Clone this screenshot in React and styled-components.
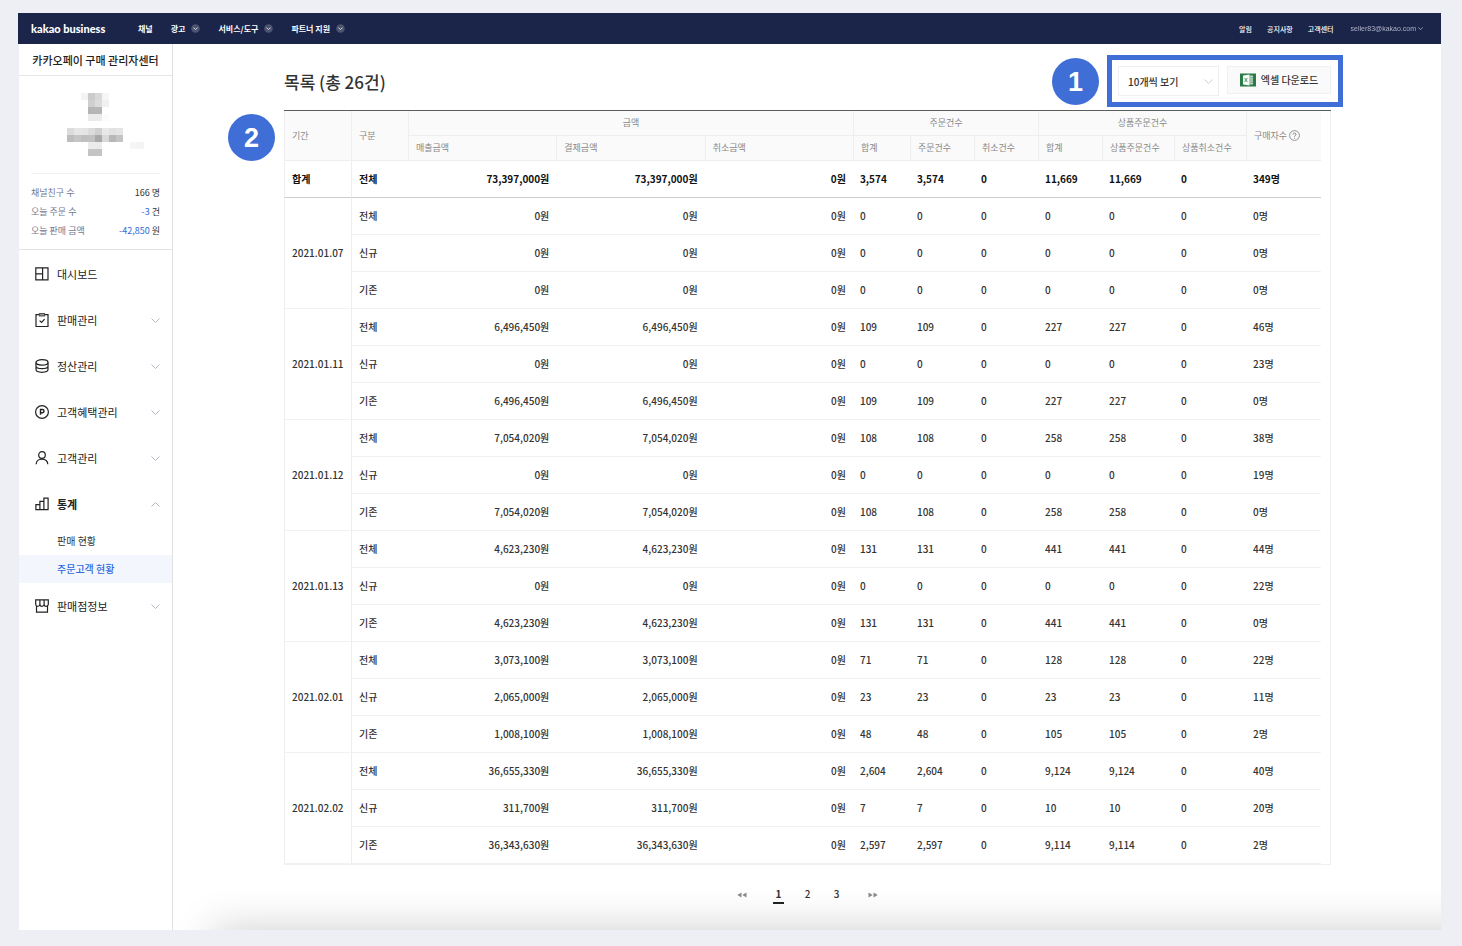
import React from "react";
import styled, { createGlobalStyle, css } from "styled-components";

const BLUE = "#3f6fd6";
const KR = `"Noto Sans CJK KR", "Noto Sans", sans-serif`;

const GlobalStyle = createGlobalStyle`
  *, *::before, *::after { box-sizing: border-box; }
  body {
    margin: 0;
    background: #eeeff5;
    color: #333;
    font-family: ${KR};
    font-size: 10px;
  }
  a { color: inherit; text-decoration: none; }
  button, select { font-family: inherit; color: inherit; margin: 0; }
`;

/* ---------- page frame ---------- */

const Page = styled.div`
  min-height: 100vh;
  display: flex;
  flex-direction: column;
  padding: 13px 21px 16px 18px;
`;

const Body = styled.div`
  flex: 1;
  display: flex;
  margin-left: 1px;
  background: #fff;
`;

/* ---------- top bar ---------- */

const TopBar = styled.header`
  display: flex;
  align-items: center;
  justify-content: space-between;
  height: 31px;
  padding: 0 18px 0 13px;
  background: #1b2449;
  color: #fff;
`;

const TopGroup = styled.div`
  display: flex;
  align-items: center;
`;

const Logo = styled.a`
  width: 107px;
  font-family: Lato, Inter, sans-serif;
  font-size: 11px;
  font-weight: 900;
  line-height: 16px;
  white-space: nowrap;
`;

const TopNav = styled.nav`
  display: flex;
  align-items: center;
  gap: 18px;
`;

const TopLink = styled.a`
  display: flex;
  align-items: center;
  gap: 6px;
  font-size: 8px;
  font-weight: 700;
  line-height: 16px;
`;

const UtilNav = styled.nav`
  display: flex;
  align-items: center;
  gap: 15px;
  font-size: 7px;
  font-weight: 500;
  line-height: 16px;
`;

const Account = styled.button`
  display: flex;
  align-items: center;
  gap: 2px;
  margin-left: 2px;
  padding: 0;
  border: 0;
  background: none;
  color: #aeb3c6;
  font-family: "Liberation Sans", sans-serif;
  font-size: 7px;
  line-height: 16px;
`;

const Smudged = styled.span`
  filter: blur(0.6px);
`;

/* ---------- sidebar ---------- */

const Sidebar = styled.aside`
  flex: none;
  width: 154px;
  border-right: 1px solid #e1e1e5;
`;

const CenterName = styled.h1`
  margin: 0;
  height: 32px;
  border-bottom: 1px solid #e6e6e9;
  font-size: 11px;
  font-weight: 500;
  line-height: 32px;
  text-align: center;
  color: #222;
`;

const Profile = styled.section`
  padding: 17px 12px 9px;
  border-bottom: 1px solid #e3e3e6;
`;

const Mosaic = styled.svg`
  display: block;
  width: 77px;
  height: 63px;
  margin: 0 0 17px 36px;
`;

const Stats = styled.dl`
  margin: 0;
  padding-top: 9px;
  border-top: 1px solid #f1f1f3;
`;

const Stat = styled.div`
  display: flex;
  justify-content: space-between;
  font-size: 9px;
  line-height: 19px;
`;

const StatLabel = styled.dt`
  color: #74778f;
`;

const StatValue = styled.dd`
  margin: 0;
  color: #333;
`;

const StatNumber = styled.span`
  color: ${(p) => (p.$negative ? "#2f69dc" : "inherit")};
`;

const SideNav = styled.nav`
  padding-top: 1px;
`;

const MenuButton = styled.button`
  display: flex;
  align-items: center;
  gap: 8px;
  width: 100%;
  height: 46px;
  padding: 0 12px 0 16px;
  border: 0;
  background: none;
  color: #222;
  font-size: 11px;
  font-weight: ${(p) => (p.$open ? 700 : 400)};
  line-height: 16px;
  text-align: left;
`;

const MenuLabel = styled.span`
  flex: 1;
`;

const SubLink = styled.a`
  display: block;
  height: 28px;
  padding-left: 38px;
  line-height: 28px;
  font-size: 10px;
  ${(p) =>
    p.$active &&
    css`
      background: #f3f6fc;
      color: #2f69dc;
      font-weight: 500;
    `}
`;

const MenuList = styled.ul`
  margin: 0;
  padding: 0;
  list-style: none;
`;

/* ---------- main ---------- */

const Main = styled.main`
  position: relative;
  flex: 1;
  min-width: 0;
  padding: 22px 110px 0 111px;
  overflow: hidden;

  &::after {
    content: "";
    position: absolute;
    top: 100%;
    left: 40px;
    right: -80px;
    height: 80px;
    box-shadow: 0 0 44px rgba(0, 0, 0, 0.2);
    pointer-events: none;
  }
`;

const ListHead = styled.div`
  position: relative;
  display: flex;
  justify-content: space-between;
  align-items: flex-start;
  height: 44px;
`;

const Title = styled.h2`
  margin: 0;
  font-size: 17px;
  font-weight: 500;
  line-height: 32px;
  color: #333;
`;

const Tools = styled.div`
  position: relative;
  display: flex;
  align-items: flex-start;
  gap: 8px;
`;

const Highlight = styled.div`
  position: absolute;
  inset: -11px -12px -11px -11px;
  border: 5px solid ${BLUE};
  pointer-events: none;
`;

const Badge = styled.span`
  position: absolute;
  top: ${(p) => p.$top};
  left: ${(p) => p.$left};
  display: flex;
  align-items: center;
  justify-content: center;
  width: 47px;
  height: 47px;
  border-radius: 50%;
  background: ${BLUE};
  color: #fff;
  font-family: "Liberation Sans", sans-serif;
  font-size: 27px;
  font-weight: 700;
  line-height: 32px;
`;

const SelectBox = styled.div`
  position: relative;

  svg {
    position: absolute;
    top: 11px;
    right: 6px;
    pointer-events: none;
  }
`;

const Select = styled.select`
  display: block;
  appearance: none;
  width: 101px;
  height: 30px;
  padding: 0 24px 0 9px;
  border: 1px solid #efefef;
  border-radius: 0;
  background: #fff;
  color: #333;
  font-size: 10px;
  font-weight: 500;
`;

const ExcelButton = styled.button`
  display: flex;
  align-items: center;
  justify-content: center;
  gap: 5px;
  width: 104px;
  height: 28px;
  padding: 0;
  border: 1px solid #f0f0f0;
  background: #fafafa;
  font-size: 10px;
  font-weight: 500;
  line-height: 16px;
`;

const TableFrame = styled.div`
  position: relative;
  padding-right: 9px;
  border: solid #f0f0f0;
  border-width: 0 1px 1px 0;

  &::before {
    content: "";
    display: block;
    height: 1px;
    margin-right: -10px;
    background: #5c5c5c;
  }
`;

const Table = styled.table`
  width: 100%;
  table-layout: fixed;
  border-collapse: separate;
  border-spacing: 0;
`;

const HeadCell = styled.th`
  height: 25px;
  padding: 0 7px;
  border: solid #eeeeee;
  border-width: 0 ${(p) => (p.$last ? 0 : 1)}px 1px ${(p) => (p.$first ? 1 : 0)}px;
  background: #fafafa;
  color: #888;
  font-size: 9px;
  font-weight: 400;
  line-height: 16px;
  text-align: ${(p) => (p.$group ? "center" : "left")};
  white-space: nowrap;
`;

const HelpLabel = styled.span`
  display: flex;
  align-items: center;
  gap: 2px;
`;

const Row = styled.tr`
  color: ${(p) => (p.$total ? "#111" : "#333")};
  font-weight: ${(p) => (p.$total ? 700 : 500)};
  --line: ${(p) => (p.$total ? "#cccccc" : "#f2f2f2")};
`;

const Cell = styled.td`
  height: 37px;
  padding: 0 8px 0 6px;
  border-bottom: 1px solid var(--line);
  font-size: 10px;
  line-height: 16px;
  text-align: ${(p) => (p.$money ? "right" : "left")};
  white-space: nowrap;
`;

const KindCell = styled(Cell)`
  padding-left: 7px;
`;

const PeriodCell = styled(Cell).attrs({ as: "th", scope: "rowgroup" })`
  padding: 0 0 0 7px;
  font-weight: inherit;
  border-left: 1px solid #eeeeee;
  border-right: 1px solid #eeeeee;
`;

const Pager = styled.nav`
  display: flex;
  justify-content: center;
  align-items: center;
  gap: 26px;
  padding: 20px 0 24px;
`;

const Pages = styled.div`
  display: flex;
  gap: 18px;
`;

const PageLink = styled.a`
  width: 11px;
  height: 19px;
  border-bottom: 2px solid ${(p) => (p.$current ? "#222" : "transparent")};
  font-size: 10px;
  font-weight: ${(p) => (p.$current ? 700 : 500)};
  line-height: 18px;
  text-align: center;
`;

const PagerStep = styled.a`
  display: flex;
  color: #8a8a8a;
`;

/* ---------- icons ---------- */

const Icon = ({ size = 14, children, ...rest }) => (
  <svg
    width={size}
    height={size}
    viewBox="0 0 14 14"
    fill="none"
    stroke="#222"
    strokeWidth="1.200"
    aria-hidden="true"
    {...rest}
  >
    {children}
  </svg>
);

const icons = {
  dashboard: (
    <Icon>
      <path d="M.8.900h12.200v11.900H.8zM7.600.900v11.900M.8 6.800h6.800" />
    </Icon>
  ),
  orders: (
    <Icon>
      <path d="M4.200 1.600H1v12h12v-12H9.800" />
      <path d="M4.500.600h5v2.200h-5z" fill="#aaa" stroke="#555" />
      <path d="M4.600 7.600l2 1.900 3-3.400" />
    </Icon>
  ),
  settlement: (
    <Icon>
      <ellipse cx="7" cy="3.400" rx="6" ry="2.700" />
      <path d="M1 3.400v7.200c0 1.500 2.700 2.700 6 2.700s6-1.200 6-2.700V3.400M1 7c0 1.500 2.700 2.700 6 2.700S13 8.500 13 7" />
    </Icon>
  ),
  benefit: (
    <Icon>
      <circle cx="7" cy="7" r="6.400" />
      <path d="M5.500 9.800V4.500h1.900a1.600 1.600 0 0 1 0 3.200H5.500" strokeWidth="1.400" />
    </Icon>
  ),
  customer: (
    <Icon>
      <circle cx="7" cy="4" r="3.300" />
      <path d="M1.200 13.200c0-3 2.500-5 5.800-5s5.800 2 5.800 5" />
    </Icon>
  ),
  stats: (
    <Icon>
      <path d="M.9 12.700V7.700h4v5M4.900 12.700V4.300h4v8.400M8.900 12.700V1.200h4.200v11.500M.3 12.700h13.300" />
    </Icon>
  ),
  store: (
    <Icon>
      <path d="M.700.900h12.600v4.300a1.900 1.900 0 0 1-4.200 0 2 2 0 0 1-4.200 0 1.900 1.900 0 0 1-4.200 0zM4.900.900v4.300M9.100.900v4.300M1.500 7v6.200h11V7" />
    </Icon>
  ),
};

const Chevron = ({ up, color = "#b4b6c4", width = 9, line = 1 }) => (
  <svg width={width} height={width} viewBox="0 0 9 9" fill="none" stroke={color} strokeWidth={line} aria-hidden="true">
    <path d={up ? "M.5 6.500l4-4 4 4" : "M.5 2.500l4 4 4-4"} />
  </svg>
);

const RoundChevron = () => (
  <svg width="9" height="9" viewBox="0 0 9 9" fill="none" aria-hidden="true">
    <circle cx="4.5" cy="4.5" r="4.3" fill="#4d5470" />
    <path d="M2.500 3.600l2 2 2-2" stroke="#d5d8e2" strokeWidth="1" />
  </svg>
);

const ExcelIcon = () => (
  <svg width="16" height="14" viewBox="0 0 16 14" aria-hidden="true">
    <path d="M0 .5h16v13H0z" fill="#2b7a47" />
    <path d="M9.500 2.500h3.500v9H9.500z" fill="#b9d6c3" />
    <path d="M9.500 4.700H13M9.500 7H13M9.500 9.300H13" stroke="#5c9a72" strokeWidth=".7" />
    <path d="M3 2.600l6.500-1v10.800L3 11.400z" fill="#f4faf6" />
    <path d="M4.600 5l2.800 4M7.400 5L4.600 9" stroke="#5c9a72" strokeWidth="1" />
  </svg>
);

const HelpIcon = () => (
  <svg width="11" height="11" viewBox="0 0 11 11" fill="none" stroke="#888" aria-hidden="true">
    <circle cx="5.5" cy="5.5" r="4.900" strokeWidth=".9" />
    <path d="M4 4.500a1.500 1.500 0 1 1 2.200 1.300c-.5.300-.7.500-.7 1M5.500 7.700v1" strokeWidth="1" />
  </svg>
);

const DoubleArrow = ({ back }) => (
  <svg width="10" height="6" viewBox="0 0 10 6" fill="currentColor" aria-hidden="true">
    <path d={back ? "M4.500.5v5L.3 3zM9.500.5v5L5.300 3z" : "M.5.5v5L4.700 3zM5.500.5v5L9.700 3z"} />
  </svg>
);

/* Pixelated profile picture and name: [column, row, colour] in 7px steps */
const mosaic = [
  [2, 0, "#f3f3f3"], [3, 0, "#cbcbcb"], [4, 0, "#d9d9d9"], [5, 0, "#f6f6f6"],
  [3, 1, "#cfcfcf"], [4, 1, "#dcdcdc"], [5, 1, "#f0f0f0"],
  [3, 2, "#b5b5b5"], [4, 2, "#b6b6b6"],
  [3, 3, "#ebebeb"], [4, 3, "#ebebeb"], [5, 3, "#fbfbfb"],
  [0, 5, "#dcdcdc"], [1, 5, "#e6e6e6"], [2, 5, "#e5e5e5"], [3, 5, "#dcdcdc"],
  [4, 5, "#d0d0d0"], [5, 5, "#e8e8e8"], [6, 5, "#e2e2e2"], [7, 5, "#e5e5e5"],
  [0, 6, "#bdbdbd"], [1, 6, "#c6c6c6"], [2, 6, "#bfbfbf"], [3, 6, "#c2c2c2"],
  [4, 6, "#a9a9a9"], [5, 6, "#d9d9d9"], [6, 6, "#b8b8b8"], [7, 6, "#c4c4c4"],
  [3, 7, "#ebebeb"], [4, 7, "#ebebeb"], [9, 7, "#f6f6f6"], [10, 7, "#f3f4f5"],
  [3, 8, "#c4c4c4"], [4, 8, "#c4c4c4"],
];

/* ---------- data ---------- */

const topLinks = [
  { label: "채널" },
  { label: "광고", more: true },
  { label: "서비스/도구", more: true },
  { label: "파트너 지원", more: true },
];

const stats = [
  { label: "채널친구 수", value: "166", unit: "명" },
  { label: "오늘 주문 수", value: "-3", unit: "건" },
  { label: "오늘 판매 금액", value: "-42,850", unit: "원" },
];

const menu = [
  { icon: "dashboard", label: "대시보드", leaf: true },
  { icon: "orders", label: "판매관리" },
  { icon: "settlement", label: "정산관리" },
  { icon: "benefit", label: "고객혜택관리" },
  { icon: "customer", label: "고객관리" },
  {
    icon: "stats",
    label: "통계",
    children: [{ label: "판매 현황" }, { label: "주문고객 현황", active: true }],
  },
  { icon: "store", label: "판매점정보" },
];

/* undefined widths are the three amount columns, which share the free space */
const columnWidths = [68, 57, undefined, undefined, undefined, 57, 64, 64, 64, 72, 72, 74];

const subHeads = [
  "매출금액", "결제금액", "취소금액",
  "합계", "주문건수", "취소건수",
  "합계", "상품주문건수", "상품취소건수",
];

/* each line: kind, amount, orders, product orders, buyers */
const periods = [
  { date: "2021.01.07", lines: [["전체", "0", "0", "0", "0"], ["신규", "0", "0", "0", "0"], ["기존", "0", "0", "0", "0"]] },
  { date: "2021.01.11", lines: [["전체", "6,496,450", "109", "227", "46"], ["신규", "0", "0", "0", "23"], ["기존", "6,496,450", "109", "227", "0"]] },
  { date: "2021.01.12", lines: [["전체", "7,054,020", "108", "258", "38"], ["신규", "0", "0", "0", "19"], ["기존", "7,054,020", "108", "258", "0"]] },
  { date: "2021.01.13", lines: [["전체", "4,623,230", "131", "441", "44"], ["신규", "0", "0", "0", "22"], ["기존", "4,623,230", "131", "441", "0"]] },
  { date: "2021.02.01", lines: [["전체", "3,073,100", "71", "128", "22"], ["신규", "2,065,000", "23", "23", "11"], ["기존", "1,008,100", "48", "105", "2"]] },
  { date: "2021.02.02", lines: [["전체", "36,655,330", "2,604", "9,124", "40"], ["신규", "311,700", "7", "10", "20"], ["기존", "36,343,630", "2,597", "9,114", "2"]] },
];

const LineCells = ({ line: [kind, amount, orders, products, buyers] }) => (
  <>
    <KindCell>{kind}</KindCell>
    <Cell $money>{amount}원</Cell>
    <Cell $money>{amount}원</Cell>
    <Cell $money>0원</Cell>
    <Cell>{orders}</Cell>
    <Cell>{orders}</Cell>
    <Cell>0</Cell>
    <Cell>{products}</Cell>
    <Cell>{products}</Cell>
    <Cell>0</Cell>
    <Cell>{buyers}명</Cell>
  </>
);

function OrderTable() {
  return (
    <Table>
      <colgroup>
        {columnWidths.map((w, i) => (
          <col key={i} width={w} />
        ))}
      </colgroup>
      <thead>
        <tr>
          <HeadCell $first rowSpan={2}>기간</HeadCell>
          <HeadCell rowSpan={2}>구분</HeadCell>
          <HeadCell $group colSpan={3}>금액</HeadCell>
          <HeadCell $group colSpan={3}>주문건수</HeadCell>
          <HeadCell $group colSpan={3}>상품주문건수</HeadCell>
          <HeadCell $last rowSpan={2}>
            <HelpLabel>구매자수 <HelpIcon /></HelpLabel>
          </HeadCell>
        </tr>
        <tr>
          {subHeads.map((label, i) => (
            <HeadCell key={i}>{label}</HeadCell>
          ))}
        </tr>
      </thead>
      <tbody>
        <Row $total>
          <PeriodCell>합계</PeriodCell>
          <LineCells line={["전체", "73,397,000", "3,574", "11,669", "349"]} />
        </Row>
      </tbody>
      {periods.map(({ date, lines }) => (
        <tbody key={date}>
          {lines.map((line, i) => (
            <Row key={line[0]}>
              {i === 0 && <PeriodCell rowSpan={3}>{date}</PeriodCell>}
              <LineCells line={line} />
            </Row>
          ))}
        </tbody>
      ))}
    </Table>
  );
}

export default function App() {
  return (
    <Page>
      <GlobalStyle />
      <TopBar>
        <TopGroup>
          <Logo href="#">kakao business</Logo>
          <TopNav>
            {topLinks.map(({ label, more }) => (
              <TopLink key={label} href="#">
                {label}
                {more && <RoundChevron />}
              </TopLink>
            ))}
          </TopNav>
        </TopGroup>
        <UtilNav>
          <a href="#">알림</a>
          <a href="#">공지사항</a>
          <a href="#">고객센터</a>
          <Account type="button">
            <Smudged>seller83@kakao.com</Smudged>
            <Chevron width={5} color="#aeb3c6" line={1.5} />
          </Account>
        </UtilNav>
      </TopBar>

      <Body>
        <Sidebar>
          <CenterName>카카오페이 구매 관리자센터</CenterName>
          <Profile>
            <Mosaic viewBox="0 0 77 63" shapeRendering="crispEdges" aria-hidden="true">
              {mosaic.map(([x, y, fill]) => (
                <rect key={`${x}-${y}`} x={x * 7} y={y * 7} width="7" height="7" fill={fill} />
              ))}
            </Mosaic>
            <Stats>
              {stats.map(({ label, value, unit }) => (
                <Stat key={label}>
                  <StatLabel>{label}</StatLabel>
                  <StatValue>
                    <StatNumber $negative={value.startsWith("-")}>{value}</StatNumber> {unit}
                  </StatValue>
                </Stat>
              ))}
            </Stats>
          </Profile>
          <SideNav>
            <MenuList>
              {menu.map(({ icon, label, leaf, children }) => (
                <li key={label}>
                  <MenuButton type="button" $open={!!children}>
                    {icons[icon]}
                    <MenuLabel>{label}</MenuLabel>
                    {!leaf && <Chevron up={!!children} />}
                  </MenuButton>
                  {children && (
                    <MenuList>
                      {children.map((c) => (
                        <li key={c.label}>
                          <SubLink href="#" $active={c.active}>{c.label}</SubLink>
                        </li>
                      ))}
                    </MenuList>
                  )}
                </li>
              ))}
            </MenuList>
          </SideNav>
        </Sidebar>

        <Main>
          <ListHead>
            <Title>목록 (총 26건)</Title>
            <Tools>
              <SelectBox>
                <Select aria-label="페이지당 건수" defaultValue="10">
                  <option value="10">10개씩 보기</option>
                </Select>
                <Chevron color="#cfcfcf" />
              </SelectBox>
              <ExcelButton type="button">
                <ExcelIcon />
                엑셀 다운로드
              </ExcelButton>
              <Highlight />
              <Badge $top="-8px" $left="-66px">1</Badge>
            </Tools>
          </ListHead>
          <TableFrame>
            <OrderTable />
            <Badge $top="4px" $left="-56px">2</Badge>
          </TableFrame>
          <Pager aria-label="페이지">
            <PagerStep href="#" aria-label="이전"><DoubleArrow back /></PagerStep>
            <Pages>
              <PageLink href="#" $current>1</PageLink>
              <PageLink href="#">2</PageLink>
              <PageLink href="#">3</PageLink>
            </Pages>
            <PagerStep href="#" aria-label="다음"><DoubleArrow /></PagerStep>
          </Pager>
        </Main>
      </Body>
    </Page>
  );
}
